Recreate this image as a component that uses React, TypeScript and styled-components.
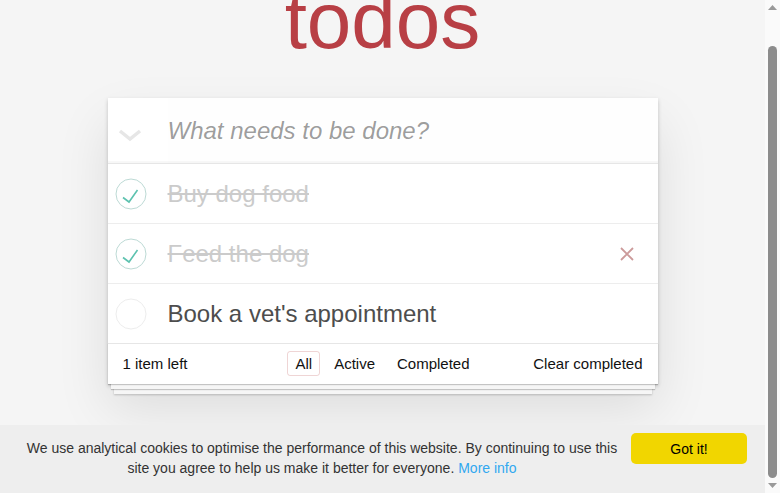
import { useLayoutEffect, useRef, useState } from "react";
import styled, { createGlobalStyle, css } from "styled-components";

const GlobalStyle = createGlobalStyle`
  html, body {
    margin: 0;
    padding: 0;
    overflow: hidden;
  }
  body {
    background: #f5f5f5;
    color: #111;
    font-family: "Liberation Sans", Arial, sans-serif;
    font-size: 14px;
  }
`

const todos = [
  { id: 1, title: "Buy dog food", done: true },
  { id: 2, title: "Feed the dog", done: true, hover: true },
  { id: 3, title: "Book a vet's appointment", done: false },
]

const ShellBase = styled.div`
  display: flex;
  height: 100vh;
`

const FrameBase = styled.div`
  flex: 1;
  position: relative;
  min-width: 0;
`

const ScrollerBase = styled.div`
  height: 100%;
  overflow: hidden;
`

const ScrollbarBase = styled.div`
  width: 15px;
  display: flex;
  flex-direction: column;
  background: #fafafa;
`

const ArrowBase = styled.div`
  height: 15px;
  display: flex;
  align-items: center;
  justify-content: center;
`

const TrackBase = styled.div`
  flex: 1;
`

const ThumbBase = styled.div`
  margin: 0 3px;
  border-radius: 5px;
  background: #8c8c8c;
`

const PageBase = styled.div`
  max-width: 550px;
  margin: 0 auto;
  padding: 16px 0 109px;
`

const TitleBase = styled.h1`
  margin: 0 0 37px;
  height: 80px;
  font-size: 80px;
  line-height: 80px;
  font-weight: 400;
  text-align: center;
  color: #b83f45;
`

const AppBase = styled.section`
  background: #fff;
  box-shadow: 0 2px 4px 0 rgba(0, 0, 0, 0.2), 0 25px 50px 0 rgba(0, 0, 0, 0.1);
`

const HeaderBase = styled.header`
  display: flex;
  align-items: center;
  height: 65px;
  box-shadow: inset 0 -2px 1px rgba(0, 0, 0, 0.03);
`

const ToggleAllBase = styled.div`
  width: 60px;
  height: 65px;
  display: flex;
  align-items: center;
  justify-content: center;
  padding-right: 15px;
  box-sizing: border-box;
  svg {
    margin-top: 10px;
  }
`

const NewTodoBase = styled.input`
  flex: 1;
  height: 65px;
  border: none;
  outline: none;
  background: rgba(0, 0, 0, 0.003);
  padding: 16px 16px 16px 0;
  box-sizing: border-box;
  font-family: "Liberation Sans", Arial, sans-serif;
  font-size: 24px;
  line-height: 1.4;
  color: #4d4d4d;
  &::placeholder {
    font-style: italic;
    color: rgba(0, 0, 0, 0.4);
  }
`

const ListBase = styled.ul`
  margin: 0;
  padding: 0;
  list-style: none;
  border-top: 1px solid #e6e6e6;
`

const RowBase = styled.li`
  display: flex;
  align-items: center;
  border-bottom: 1px solid #ededed;
  &:last-child {
    border-bottom: none;
  }
`

const ToggleBase = styled.div`
  width: 60px;
  padding-left: 7px;
  box-sizing: border-box;
  display: flex;
  align-items: center;
`

const LabelBase = styled.label<{ done: boolean }>`
  flex: 1;
  padding: 15px 15px 15px 0;
  font-size: 24px;
  line-height: 29px;
  color: #4d4d4d;
  ${props => props.done && css`
    color: #cbcbcb;
    text-decoration: line-through;
  `}
`

const DestroyBase = styled.button`
  width: 40px;
  height: 40px;
  margin-right: 11px;
  border: none;
  background: none;
  padding: 0;
  display: flex;
  align-items: center;
  justify-content: center;
`

const FooterBase = styled.footer`
  display: grid;
  grid-template-columns: 1fr auto 1fr;
  align-items: center;
  height: 20px;
  padding: 10px 15px;
  border-top: 1px solid #e6e6e6;
  font-size: 15px;
  line-height: 20px;
  color: #111;
  box-shadow: 0 1px 1px rgba(0, 0, 0, 0.2),
    0 8px 0 -3px #f6f6f6,
    0 9px 1px -3px rgba(0, 0, 0, 0.2),
    0 16px 0 -6px #f6f6f6,
    0 17px 2px -6px rgba(0, 0, 0, 0.2);
`

const CountBase = styled.span`
  justify-self: start;
`

const FiltersBase = styled.span`
  white-space: nowrap;
`

const FilterLinkBase = styled.a<{ selected: boolean }>`
  margin: 3px;
  padding: 3px 7px;
  border: 1px solid transparent;
  border-radius: 3px;
  color: inherit;
  text-decoration: none;
  ${props => props.selected && css`
    border-color: rgba(175, 47, 47, 0.2);
  `}
`

const ClearBase = styled.span`
  justify-self: end;
`

const CookieBarBase = styled.div`
  position: absolute;
  left: 0;
  right: 0;
  bottom: 0;
  display: flex;
  align-items: flex-start;
  padding: 8px 18px 15px;
  background: #eee;
  font-size: 14px;
  line-height: 20px;
  color: #333;
`

const CookieMessageBase = styled.div`
  flex: 1;
  padding-top: 5px;
  margin-right: 5px;
  text-align: center;
`

const MoreInfoBase = styled.a`
  color: #31a8f0;
  text-decoration: none;
`

const GotItBase = styled.button`
  width: 116px;
  height: 31px;
  border: none;
  border-radius: 5px;
  background: #f1d600;
  color: #000;
  font-family: "Liberation Sans", Arial, sans-serif;
  font-size: 14px;
`

const Chevron = () => (
  <svg width="24" height="13" viewBox="0 0 24 13">
    <polyline points="2,2 12,10 22,2" fill="none" stroke="#e6e6e6" strokeWidth="3.5" />
  </svg>
)

const Check = ({ done }: { done: boolean }) => (
  <svg width="32" height="32" viewBox="0 0 32 32">
    <circle cx="16" cy="16" r="15" fill="none" stroke={done ? "#bddad5" : "#ededed"} strokeWidth="1" />
    {done && <polyline points="8,19.5 14,24 22.5,12" fill="none" stroke="#5dc2af" strokeWidth="1.6" />}
  </svg>
)

const Cross = () => (
  <svg width="16" height="16" viewBox="0 0 16 16">
    <path d="M2 2 L14 14 M14 2 L2 14" stroke="#cc9a9a" strokeWidth="1.8" />
  </svg>
)

const Arrow = ({ up }: { up: boolean }) => (
  <svg width="9" height="5" viewBox="0 0 9 5">
    <polygon points={up ? "4.5,0 9,5 0,5" : "0,0 9,0 4.5,5"} fill="#999" />
  </svg>
)

const App = () => {
  const scroller = useRef<HTMLDivElement>(null)
  const [thumb, setThumb] = useState({ top: 31, size: 432 })

  useLayoutEffect(() => {
    const el = scroller.current
    if (!el) return
    el.scrollTop = el.scrollHeight - el.clientHeight
    const track = el.clientHeight - 30
    setThumb({
      top: Math.round(track * el.scrollTop / el.scrollHeight),
      size: Math.round(track * el.clientHeight / el.scrollHeight),
    })
  }, [])

  const left = todos.filter(t => !t.done).length

  return <ShellBase>
    <GlobalStyle />
    <FrameBase>
      <ScrollerBase ref={scroller}>
        <PageBase>
          <TitleBase>todos</TitleBase>
          <AppBase>
            <HeaderBase>
              <ToggleAllBase><Chevron /></ToggleAllBase>
              <NewTodoBase placeholder="What needs to be done?" />
            </HeaderBase>
            <ListBase>
              {todos.map(todo => (
                <RowBase key={todo.id}>
                  <ToggleBase><Check done={todo.done} /></ToggleBase>
                  <LabelBase done={todo.done}>{todo.title}</LabelBase>
                  {todo.hover && <DestroyBase><Cross /></DestroyBase>}
                </RowBase>
              ))}
            </ListBase>
            <FooterBase>
              <CountBase>{left} item left</CountBase>
              <FiltersBase>
                <FilterLinkBase selected href="#/">All</FilterLinkBase>
                <FilterLinkBase selected={false} href="#/active">Active</FilterLinkBase>
                <FilterLinkBase selected={false} href="#/completed">Completed</FilterLinkBase>
              </FiltersBase>
              <ClearBase>Clear completed</ClearBase>
            </FooterBase>
          </AppBase>
        </PageBase>
      </ScrollerBase>
      <CookieBarBase>
        <CookieMessageBase>
          We use analytical cookies to optimise the performance of this website. By continuing to use this site you agree to help us make it better for everyone. <MoreInfoBase href="#">More info</MoreInfoBase>
        </CookieMessageBase>
        <GotItBase>Got it!</GotItBase>
      </CookieBarBase>
    </FrameBase>
    <ScrollbarBase>
      <ArrowBase><Arrow up /></ArrowBase>
      <TrackBase>
        <ThumbBase style={{ marginTop: thumb.top, height: thumb.size }} />
      </TrackBase>
      <ArrowBase><Arrow up={false} /></ArrowBase>
    </ScrollbarBase>
  </ShellBase>
}

export default App;
